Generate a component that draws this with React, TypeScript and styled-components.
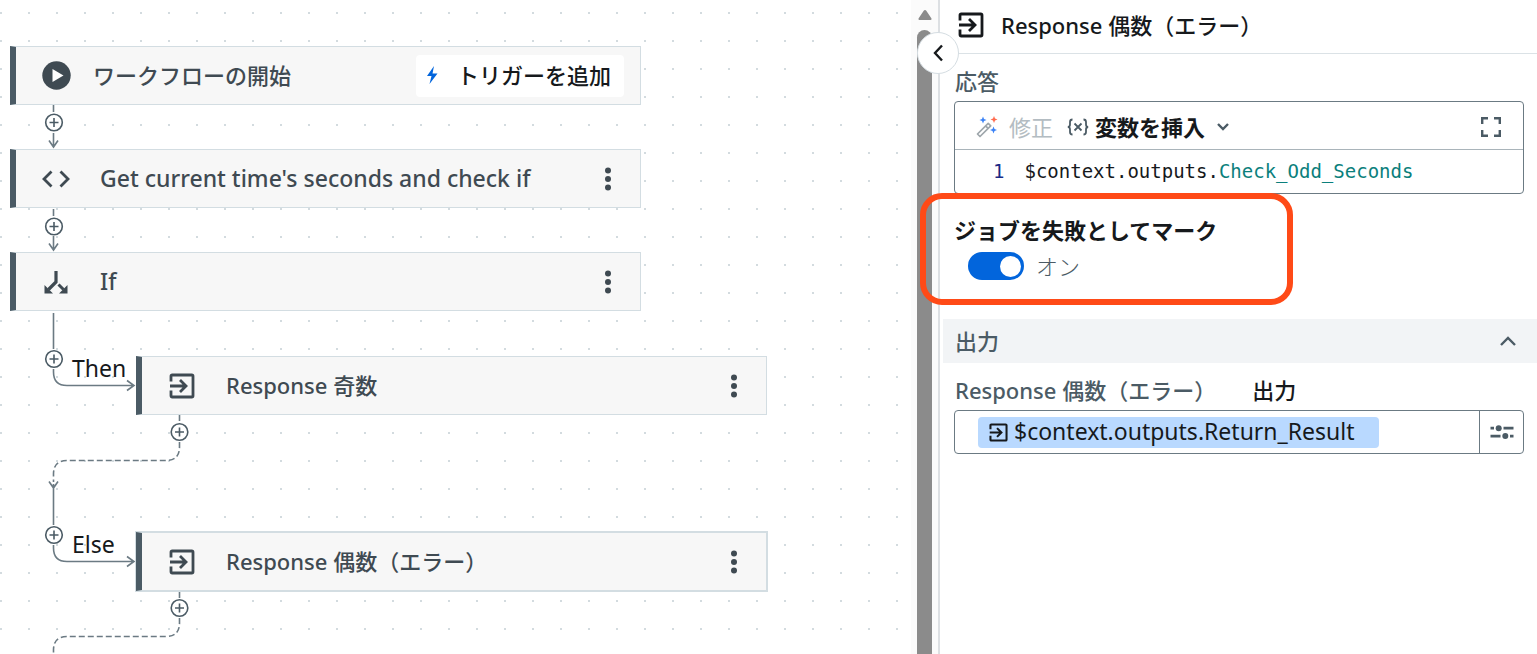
import React from 'react';
import styled, { createGlobalStyle, css } from 'styled-components';

const ink = '#3f4a52';
const slate = '#4b5b65';
const line = '#6b7a83';

const GlobalStyle = createGlobalStyle`
  * { box-sizing: border-box; }
  body {
    margin: 0;
    background: #fff;
    color: #16191c;
    font-family: 'Noto Sans', 'Noto Sans CJK JP', sans-serif;
    font-size: 22px;
    line-height: 32px;
  }
  button, input {
    font: inherit;
    color: inherit;
    margin: 0;
    padding: 0;
    border: 0;
    background: none;
  }
  button { cursor: pointer; }
  svg { display: block; flex: none; }
`;

const Page = styled.div`
  display: flex;
  height: 100vh;
  overflow: hidden;
`;

/* ---------- Workflow canvas ---------- */

const Canvas = styled.main`
  position: relative;
  flex: 1;
  min-width: 0;
  overflow: hidden;
  background: radial-gradient(circle, #d3dbdf 1px, transparent 1px) 15px 27px / 28px 28px #fff;
`;

const Edges = styled.svg`
  position: absolute;
  top: 0;
  left: 0;
  fill: none;
  stroke: ${line};
  stroke-width: 1.6;
`;

const Node = styled.section<{ $x: number; $y: number; $selected?: boolean }>`
  position: absolute;
  left: ${(p) => p.$x}px;
  top: ${(p) => p.$y}px;
  display: flex;
  align-items: center;
  width: 631px;
  height: 59px;
  padding: 0 16px 0 26px;
  background: #f7f7f7;
  border: 1px solid #d3dde2;
  border-left: 6px solid ${slate};
  color: ${ink};
  font-weight: 500;
  ${(p) => p.$selected && css`box-shadow: 0 0 0 1px #d3dde2;`}
`;

const NodeIcon = styled.span`
  display: flex;
  justify-content: center;
  width: 28px;
`;

const NodeTitle = styled.span<{ $start?: boolean; $latin?: boolean }>`
  flex: 1;
  margin-left: ${(p) => (p.$start ? 23 : 30)}px;
  padding-bottom: 2px;
  font-size: ${(p) => (p.$latin ? 23 : 22)}px;
  white-space: nowrap;
`;

const MenuButton = styled.button`
  display: flex;
  justify-content: center;
  width: 32px;
  padding: 4px 0;
`;

const TriggerButton = styled.button`
  display: flex;
  align-items: center;
  gap: 17px;
  height: 42px;
  padding: 0 13px 2px 8px;
  border-radius: 4px;
  background: #fff;
  color: #16191c;
`;

const BranchLabel = styled.span<{ $x: number; $y: number }>`
  position: absolute;
  left: ${(p) => p.$x}px;
  top: ${(p) => p.$y}px;
  color: #16191c;
  font-size: 23px;
`;

/* ---------- Scroll bar ---------- */

const ScrollBar = styled.div`
  display: flex;
  flex-direction: column;
  align-items: center;
  gap: 10px;
  width: 27px;
  padding-top: 10px;
  background: #fbfbfb;
`;

const Thumb = styled.div`
  flex: 1;
  width: 15px;
  border-radius: 8px 8px 0 0;
  background: #8b8b8b;
`;

/* ---------- Details panel ---------- */

const Panel = styled.aside`
  position: relative;
  width: 599px;
  border-left: 2px solid #dde0e3;
`;

const CollapseButton = styled.button`
  position: absolute;
  left: -23px;
  top: 32px;
  display: flex;
  align-items: center;
  justify-content: center;
  width: 42px;
  height: 42px;
  border: 1px solid #d5dde2;
  border-radius: 50%;
  background: #fff;
`;

const PanelHeader = styled.header`
  display: flex;
  align-items: center;
  gap: 17px;
  height: 54px;
  padding: 0 18px 3px;
  border-bottom: 1px solid #dbe2e6;
`;

const PanelTitle = styled.h1`
  margin: 0;
  padding-bottom: 1px;
  font-size: 22px;
  font-weight: 500;
`;

const Block = styled.div`
  padding: 11px 13px 0 14px;
`;

const FieldLabel = styled.div`
  display: flex;
  gap: 36px;
  margin-bottom: 4px;
  padding-left: 1px;
  color: ${slate};
  font-weight: 500;
  white-space: nowrap;
`;

const FieldKind = styled.span`
  color: #16191c;
`;

const Editor = styled.div`
  border: 1px solid ${line};
  border-radius: 4px;
`;

const Toolbar = styled.div`
  display: flex;
  align-items: center;
  height: 48px;
  padding: 2px 21px 0;
  border-bottom: 1px solid #a9b4ba;
`;

const ToolButton = styled.button<{ $muted?: boolean }>`
  display: flex;
  align-items: center;
  gap: ${(p) => (p.$muted ? 11 : 6)}px;
  margin-right: ${(p) => (p.$muted ? 14 : 0)}px;
  color: ${(p) => (p.$muted ? '#b3bcc2' : '#16191c')};
  font-weight: ${(p) => (p.$muted ? 400 : 700)};
`;

const ExpandButton = styled.button`
  margin-left: auto;
`;

const CodeRow = styled.div`
  display: flex;
  gap: 20px;
  height: 43px;
  padding: 5px 38px;
  font-family: 'DejaVu Sans Mono', monospace;
  font-size: 19px;
  white-space: nowrap;
`;

const LineNumber = styled.span`
  color: #1a2a86;
`;

const CodeLine = styled.span`
  outline: none;
`;

const CodeName = styled.span`
  color: #0b7f7c;
`;

const Callout = styled.div`
  position: absolute;
  left: -20px;
  top: 193px;
  width: 373px;
  height: 112px;
  border: 6px solid #ff4a17;
  border-radius: 22px;
  pointer-events: none;
`;

const ToggleLabel = styled.label`
  display: block;
  margin-top: 20px;
  font-weight: 700;
`;

const ToggleRow = styled.div`
  display: flex;
  align-items: center;
  gap: 12px;
  height: 40px;
  padding-left: 14px;
  color: ${slate};
  font-weight: 300;
`;

const Toggle = styled.input`
  appearance: none;
  display: flex;
  align-items: center;
  width: 56px;
  height: 28px;
  padding: 0 3px;
  border-radius: 14px;
  background: #9aa5ac;
  &::after {
    content: '';
    width: 21px;
    height: 21px;
    border-radius: 50%;
    background: #fff;
  }
  &:checked {
    justify-content: flex-end;
    background: #0265dc;
  }
`;

const SectionButton = styled.button`
  display: flex;
  align-items: center;
  justify-content: space-between;
  width: calc(100% - 3px);
  height: 44px;
  margin: 33px 0 0 3px;
  padding: 0 20px 0 12px;
  background: #f2f4f6;
  color: ${slate};
  font-weight: 500;
`;

const ValueField = styled.div`
  display: flex;
  height: 44px;
  border: 1px solid ${line};
  border-radius: 4px;
`;

const ChipArea = styled.div`
  flex: 1;
  display: flex;
  align-items: center;
  padding-left: 23px;
`;

const Chip = styled.span`
  display: flex;
  align-items: center;
  gap: 6px;
  width: 401px;
  height: 31px;
  padding-left: 11px;
  border-radius: 4px;
  background: #b9d9ff;
`;

const ChipInput = styled.input`
  flex: 1;
  min-width: 0;
  height: 31px;
  padding-bottom: 2px;
  font-size: 23px;
`;

const OptionsButton = styled.button`
  display: flex;
  align-items: center;
  justify-content: center;
  width: 44px;
  border-left: 1px solid ${line};
`;

/* ---------- Icons ---------- */

const ResponseIcon = ({ size = 26 }: { size?: number }) => (
  <svg width={size} height={size} viewBox="0 0 26 26" fill="none" stroke="currentColor" strokeWidth="2.8">
    <path d="M2 8.5V3.2Q2 2 3.2 2H22.8Q24 2 24 3.2V22.8Q24 24 22.8 24H3.2Q2 24 2 22.8V17.5" />
    <path d="M1 13H16.5M11 7L17 13L11 19" />
  </svg>
);

const PlayIcon = () => (
  <svg width="29" height="29" viewBox="0 0 29 29">
    <circle cx="14.5" cy="14.5" r="14.2" fill={ink} />
    <path d="M10.5 8V21L21.5 14.5Z" fill="#fff" />
  </svg>
);

const CodeIcon = () => (
  <svg width="28" height="18" viewBox="0 0 28 18" fill="none" stroke="currentColor" strokeWidth="2.8">
    <path d="M9.5 1.5L2 9L9.5 16.5M18.5 1.5L26 9L18.5 16.5" />
  </svg>
);

const BranchIcon = () => (
  <svg width="24" height="24" viewBox="0 0 24 24">
    <path d="M12 1V12L4.500 19.500" fill="none" stroke="currentColor" strokeWidth="3.2" />
    <path d="M14.5 14.5L19.5 19.5" fill="none" stroke="currentColor" strokeWidth="3" />
    <path d="M0.5 15V23.5H9ZM23.5 15V23.5H15Z" fill="currentColor" />
  </svg>
);

const DotsIcon = () => (
  <svg width="6" height="24" viewBox="0 0 6 24" fill="currentColor">
    <circle cx="3" cy="3.5" r="3" />
    <circle cx="3" cy="12" r="3" />
    <circle cx="3" cy="20.5" r="3" />
  </svg>
);

const BoltIcon = () => (
  <svg width="16" height="18" viewBox="0 0 16 18">
    <path d="M10 0L3 10H7.5L5.5 18L13.5 7.5H8.5Z" fill="#0265dc" />
  </svg>
);

const WandIcon = () => (
  <svg width="22" height="22" viewBox="0 0 22 22">
    <path d="M1.500 18L12.200 7.300L14.700 9.800L4 20.500ZM9.6 9.9L12.100 12.400" fill="none" stroke="#9ea6ab" strokeWidth="1.700" strokeLinejoin="round" />
    <path d="M7 0.500L8 3L10.500 4L8 5L7 7.500L6 5L3.500 4L6 3ZM17.500 10.500L18.500 13L21 14L18.500 15L17.500 17.500L16.500 15L14 14L16.500 13Z" fill="#3b82f6" />
    <path d="M18 0L19 2.500L21.500 3.500L19 4.500L18 7L17 4.500L14.500 3.500L17 2.500Z" fill="#ff6a4d" />
  </svg>
);

const VariableIcon = () => (
  <svg width="22" height="18" viewBox="0 0 22 18" fill="none" stroke={slate} strokeWidth="1.8">
    <path d="M5.5 1.5Q3 1.5 3 4V6.500Q3 9 0.800 9Q3 9 3 11.500V14Q3 16.500 5.500 16.500M16.500 1.500Q19 1.500 19 4V6.500Q19 9 21.200 9Q19 9 19 11.500V14Q19 16.500 16.500 16.500M7.500 5.500L14.500 12.500M14.500 5.500L7.500 12.500" />
  </svg>
);

const Chevron = ({ d, w, h, color = 'currentColor' }: { d: string; w: number; h: number; color?: string }) => (
  <svg width={w} height={h} viewBox={`0 0 ${w} ${h}`} fill="none" stroke={color} strokeWidth="2.4">
    <path d={d} />
  </svg>
);

const ExpandIcon = () => (
  <svg width="22" height="22" viewBox="0 0 22 22" fill="none" stroke={slate} strokeWidth="2.4">
    <path d="M2.200 8V2.200H8M14 2.200H19.800V8M19.800 14V19.800H14M8 19.800H2.200V14" />
  </svg>
);

const SlidersIcon = () => (
  <svg width="24" height="14" viewBox="0 0 24 14" fill={slate}>
    <path d="M0.500 1.800H4V4.500H0.500ZM13.500 1.800H23.500V4.500H13.500ZM0.500 9.800H10.500V12.500H0.500ZM20 9.800H23.500V12.500H20Z" />
    <circle cx="8.7" cy="3.2" r="3" />
    <circle cx="15.3" cy="11" r="3" />
  </svg>
);

const AddPoint = ({ x, y }: { x: number; y: number }) => (
  <g stroke={slate}>
    <circle cx={x} cy={y} r="8.3" fill="#fff" />
    <path d={`M${x - 4.5} ${y}H${x + 4.5}M${x} ${y - 4.5}V${y + 4.5}`} />
  </g>
);

/* ---------- App ---------- */

const Menu = () => (
  <MenuButton aria-label="メニュー">
    <DotsIcon />
  </MenuButton>
);

export default function App() {
  return (
    <Page>
      <GlobalStyle />
      <Canvas>
        <Edges width="200" height="700" viewBox="0 0 200 700">
          <path d="M53.500 105V112M53.500 133V147M49 140.500L53.500 147L58 140.500" />
          <path d="M53.500 209V216M53.500 236V250M49 243.500L53.500 250L58 243.500" />
          <path d="M53.500 313V349M53.500 369V372Q53.500 385.500 67 385.500H134M127 380.500L134 385.500L127 390.500" />
          <path d="M179.500 415V423M179.500 442V447Q179.500 460.500 166 460.500H67Q53.500 460.500 53.500 474V482" strokeDasharray="6 3" />
          <path d="M49 481.500L53.500 488L58 481.500M53.500 484V525M53.500 545V548Q53.500 561.500 67 561.500H134M127 556.500L134 561.500L127 566.500" />
          <path d="M179.500 592V599M179.500 618V623Q179.500 636.500 166 636.500H67Q53.500 636.500 53.500 650V660" strokeDasharray="6 3" />
          <AddPoint x={54} y={122.5} />
          <AddPoint x={54} y={226.5} />
          <AddPoint x={54} y={359} />
          <AddPoint x={179.5} y={432} />
          <AddPoint x={54} y={535} />
          <AddPoint x={179.5} y={608} />
        </Edges>

        <Node $x={10} $y={46}>
          <NodeIcon><PlayIcon /></NodeIcon>
          <NodeTitle $start>ワークフローの開始</NodeTitle>
          <TriggerButton>
            <BoltIcon />
            トリガーを追加
          </TriggerButton>
        </Node>
        <Node $x={10} $y={149}>
          <NodeIcon><CodeIcon /></NodeIcon>
          <NodeTitle $latin>Get current time's seconds and check if</NodeTitle>
          <Menu />
        </Node>
        <Node $x={10} $y={252}>
          <NodeIcon><BranchIcon /></NodeIcon>
          <NodeTitle $latin>If</NodeTitle>
          <Menu />
        </Node>
        <BranchLabel $x={72} $y={352}>Then</BranchLabel>
        <Node $x={136} $y={356}>
          <NodeIcon><ResponseIcon /></NodeIcon>
          <NodeTitle>Response 奇数</NodeTitle>
          <Menu />
        </Node>
        <BranchLabel $x={72} $y={528}>Else</BranchLabel>
        <Node $x={136} $y={532} $selected>
          <NodeIcon><ResponseIcon /></NodeIcon>
          <NodeTitle>Response 偶数（エラー）</NodeTitle>
          <Menu />
        </Node>
      </Canvas>

      <ScrollBar>
        <svg width="14" height="10" viewBox="0 0 14 10" fill="#8b8b8b">
          <path d="M7 0Q7.800 0 8.300 0.800L13.500 8.500Q13.800 10 12.500 10H1.500Q0.200 10 0.500 8.500L5.700 0.800Q6.200 0 7 0Z" />
        </svg>
        <Thumb />
      </ScrollBar>

      <Panel>
        <PanelHeader>
          <ResponseIcon />
          <PanelTitle>Response 偶数（エラー）</PanelTitle>
        </PanelHeader>
        <CollapseButton aria-label="パネルを閉じる">
          <Chevron w={12} h={18} d="M10 1.500L3 9L10 16.500" />
        </CollapseButton>

        <Block>
          <FieldLabel>応答</FieldLabel>
          <Editor>
            <Toolbar>
              <ToolButton $muted>
                <WandIcon />
                修正
              </ToolButton>
              <ToolButton>
                <VariableIcon />
                変数を挿入
                <Chevron w={22} h={8} d="M7 1L12 6L17 1" color={slate} />
              </ToolButton>
              <ExpandButton aria-label="全画面表示">
                <ExpandIcon />
              </ExpandButton>
            </Toolbar>
            <CodeRow>
              <LineNumber>1</LineNumber>
              <CodeLine role="textbox" aria-label="応答" contentEditable suppressContentEditableWarning>
                $context.outputs.<CodeName>Check_Odd_Seconds</CodeName>
              </CodeLine>
            </CodeRow>
          </Editor>
          <ToggleLabel htmlFor="mark-failed">ジョブを失敗としてマーク</ToggleLabel>
          <ToggleRow>
            <Toggle id="mark-failed" type="checkbox" defaultChecked />
            オン
          </ToggleRow>
        </Block>

        <SectionButton aria-expanded="true">
          出力
          <Chevron w={18} h={12} d="M2 10L9 3L16 10" />
        </SectionButton>

        <Block>
          <FieldLabel as="label" htmlFor="output-value">
            Response 偶数（エラー）
            <FieldKind>出力</FieldKind>
          </FieldLabel>
          <ValueField>
            <ChipArea>
              <Chip>
                <ResponseIcon size={19} />
                <ChipInput id="output-value" readOnly value="$context.outputs.Return_Result" />
              </Chip>
            </ChipArea>
            <OptionsButton aria-label="オプション">
              <SlidersIcon />
            </OptionsButton>
          </ValueField>
        </Block>
        <Callout />
      </Panel>
    </Page>
  );
}
